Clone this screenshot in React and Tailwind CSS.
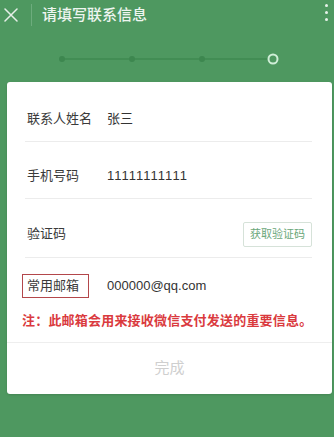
import React from 'react';

const font = { fontFamily: '"Liberation Sans", "Noto Sans CJK SC", sans-serif' };

function Row({ label, children, className = '' }) {
  return (
    <div className={`flex items-center pl-[20px] pr-[20px] ${className}`}>
      <span className="w-[80px] shrink-0 text-[13px] text-[#3a3a3a]">{label}</span>
      <div className="flex flex-1 items-center text-[13px] text-[#333]">{children}</div>
    </div>
  );
}

function Divider() {
  return <div className="ml-[18px] mr-[20px] h-px bg-[#ececec]" />;
}

export default function App() {
  return (
    <div className="h-[437px] w-[334px] overflow-hidden bg-[#4e9860]" style={font}>
      {/* header */}
      <div className="flex h-[30px] items-center">
        <svg width="14" height="14" viewBox="0 0 14 14" className="ml-[4px]">
          <path d="M1 1 L13 13 M13 1 L1 13" stroke="#e6efe8" strokeWidth="1.5" strokeLinecap="round" />
        </svg>
        <div className="ml-[13px] h-[22px] w-px bg-[#6dac7d]" />
        <span className="ml-[10px] text-[15px] font-medium text-[#eef5f0]">请填写联系信息</span>
        <div className="ml-auto mr-[6px] flex flex-col gap-[4px] self-start pt-[4px]">
          <span className="h-[3px] w-[3px] rounded-full bg-[#e6f2e9]" />
          <span className="h-[3px] w-[3px] rounded-full bg-[#e6f2e9]" />
          <span className="h-[3px] w-[3px] rounded-full bg-[#e6f2e9]" />
        </div>
      </div>

      {/* progress */}
      <div className="h-[52px]">
        <svg width="334" height="52" viewBox="0 0 334 52">
          <line x1="62" y1="29" x2="268" y2="29" stroke="#3f8a51" strokeWidth="1.3" />
          <circle cx="62" cy="29" r="3" fill="#3d874f" />
          <circle cx="132" cy="29" r="3" fill="#3d874f" />
          <circle cx="202" cy="29" r="3" fill="#3d874f" />
          <circle cx="273" cy="29" r="4.5" fill="#4e9860" stroke="#cfeed7" strokeWidth="2" />
        </svg>
      </div>

      {/* card */}
      <div className="ml-[7px] mr-[2px] rounded-[3px] bg-white pt-[3px] shadow-sm">
        <Row label="联系人姓名" className="h-[56px] pt-[12px]">张三</Row>
        <Divider />
        <Row label="手机号码" className="h-[56px] pt-[12px]">
          <span className="tracking-[1px]">11111111111</span>
        </Row>
        <Divider />
        <Row label="验证码" className="h-[58px] pt-[12px]">
          <button className="ml-auto h-[25px] w-[69px] rounded-[2px] border border-[#d6e2d9] text-[11px] text-[#6aa77a]">
            获取验证码
          </button>
        </Row>
        <Divider />
        <div className="flex items-center pl-[15px] pr-[20px] pt-[16px]">
          <span className="box-border flex h-[24px] w-[67px] shrink-0 items-center border-[1.5px] border-[#b3474b] pl-[4px] text-[13px] text-[#3a3a3a]">
            常用邮箱
          </span>
          <span className="ml-[18px] text-[13px] text-[#333]">000000@qq.com</span>
        </div>
        <div className="mt-[13px] pb-[11px] pl-[15px] text-[13px] font-semibold leading-[20px] tracking-[0.2px] text-[#da3a3e]">
          注：此邮箱会用来接收微信支付发送的重要信息。
        </div>
        <div className="h-px bg-[#eeeeee]" />
        <div className="flex h-[51px] items-center justify-center text-[15px] text-[#cfcfcf]">完成</div>
      </div>
    </div>
  );
}
